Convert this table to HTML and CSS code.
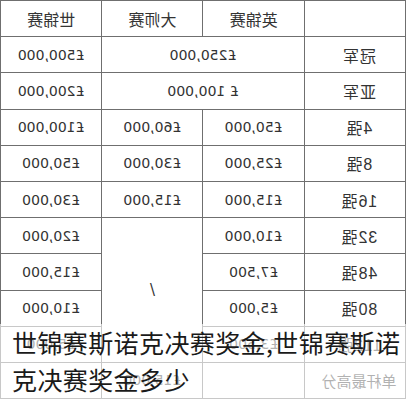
FILE: index.html
```html
<!DOCTYPE html>
<html lang="zh">
<head>
<meta charset="utf-8">
<title>世锦赛斯诺克决赛奖金</title>
<link rel="stylesheet" href="styles.css">
</head>
<body>
<div class="frame">
  <table class="prize">
    <tr class="head"><td></td><td>英锦赛</td><td>大师赛</td><td>世锦赛</td></tr>
    <tr><td class="label">冠军</td><td colspan="2">£250,000</td><td>£500,000</td></tr>
    <tr><td class="label">亚军</td><td colspan="2">£ 100,000</td><td>£200,000</td></tr>
    <tr><td class="label">4强</td><td>£50,000</td><td>£60,000</td><td>£100,000</td></tr>
    <tr><td class="label">8强</td><td>£25,000</td><td>£30,000</td><td>£50,000</td></tr>
    <tr><td class="label">16强</td><td>£15,000</td><td>£15,000</td><td>£30,000</td></tr>
    <tr><td class="label">32强</td><td>£10,000</td><td rowspan="4" class="slash">/</td><td>£20,000</td></tr>
    <tr><td class="label">48强</td><td>£7,500</td><td>£15,000</td></tr>
    <tr><td class="label">80强</td><td>£5,000</td><td>£10,000</td></tr>
    <tr><td class="label">112强</td><td>£3,500</td><td>£5,000</td></tr>
    <tr><td class="label small">单杆最高分</td><td></td><td>£15,000</td><td></td></tr>
  </table>
  <div class="caption">世锦赛斯诺克决赛奖金,世锦赛斯诺克决赛奖金多少</div>
</div>
</body>
</html>
```

FILE: styles.css
```css
html, body {
  margin: 0;
  padding: 0;
  background: #fff;
}
.frame {
  position: relative;
  width: 407px;
  height: 400px;
  overflow: hidden;
}
.prize {
  width: 406px;
  border-collapse: collapse;
  transform: scaleX(-1);
  transform-origin: 203px 0;
  font-family: "DejaVu Sans", "Noto Sans CJK SC", sans-serif;
  font-size: 14px;
  color: #333;
  table-layout: fixed;
}
.prize td {
  border: 1px solid #6f6f6f;
  height: 35.2px;
  padding: 0;
  text-align: center;
  vertical-align: middle;
  width: 25%;
}
.prize .head td {
  font-size: 16px;
  font-family: "Noto Sans CJK SC", sans-serif;
}
.prize .label {
  font-size: 16px;
  font-family: "Liberation Sans", "Noto Sans CJK SC", sans-serif;
  letter-spacing: 1px;
  padding-right: 8px;
}
.prize .label.small {
  font-size: 15px;
  letter-spacing: 0;
}
.prize .slash {
  font-size: 15px;
}
.caption {
  position: absolute;
  left: 0;
  top: 324px;
  bottom: 0;
  box-sizing: border-box;
  width: 407px;
  padding-left: 12px;
  background: rgba(255, 255, 255, 0.62);
  font-family: "Noto Sans CJK SC", sans-serif;
  font-size: 25px;
  letter-spacing: 0.4px;
  line-height: 37px;
  color: #1a1a1a;
}
```
